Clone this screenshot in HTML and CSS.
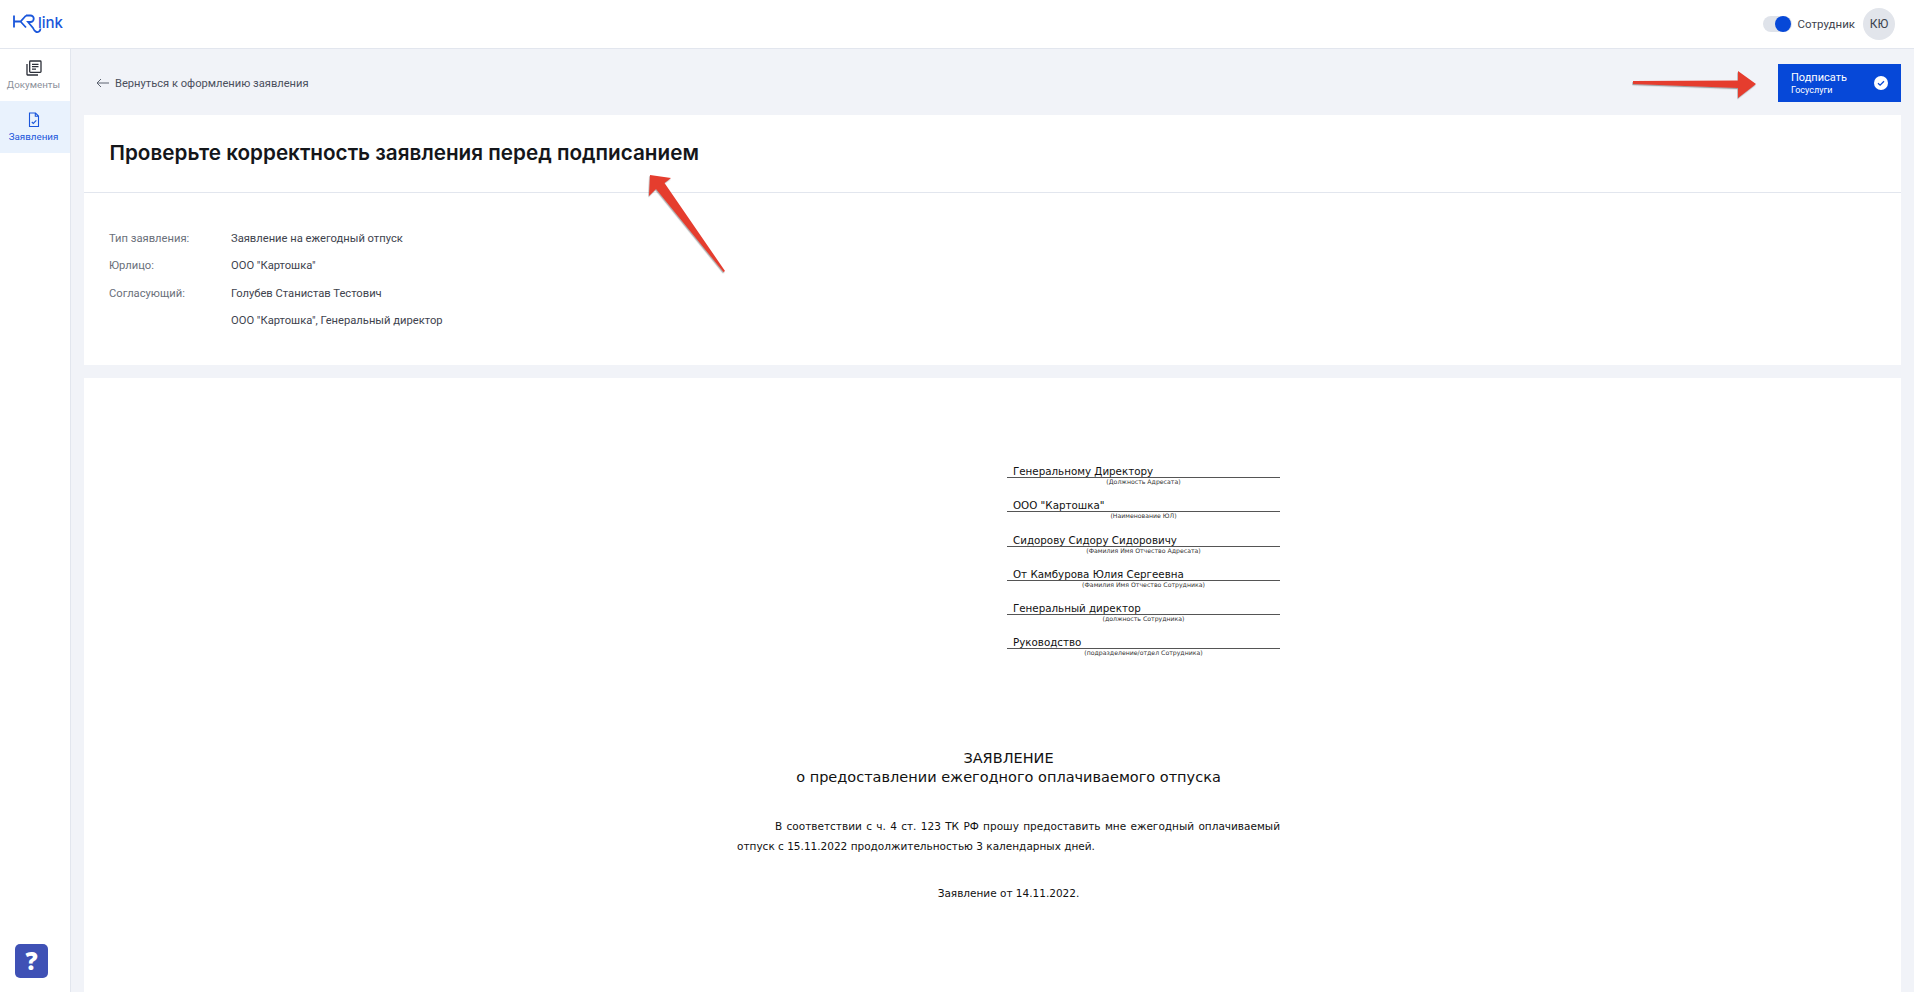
FILE: index.html
```html
<!DOCTYPE html>
<html lang="ru">
<head>
<meta charset="utf-8">
<title>HRlink</title>
<link rel="stylesheet" href="styles.css">
</head>
<body>
<div class="app">
  <header class="topbar">
    <svg class="logo" viewBox="0 0 50 21" width="50" height="21" fill="none" stroke="#1a56db" stroke-width="1.8">
      <path d="M1 2.500v12M1 8.500h6.500L13 2.500M7.500 8.500L13 14.500"/>
      <path d="M13 2.500h4.500a3.200 3.200 0 0 1 0 6.500H15l5 6c1.500 3.500 4 5 6 3.500 1-.8 1.500-2 1.500-3"/>
      <text x="25" y="14.500" class="logo-text" stroke="none" fill="#1a56db">link</text>
    </svg>
    <div class="user">
      <span class="toggle"><span class="knob"></span></span>
      <span class="role">Сотрудник</span>
      <span class="avatar">КЮ</span>
    </div>
  </header>
  <div class="body-row">
    <nav class="sidebar">
      <a class="nav-item">
        <svg width="16" height="16" viewBox="0 0 16 16" fill="none" stroke="#2b2f38" stroke-width="1.300">
          <path d="M1 4v10.500a.5.500 0 0 0 .5.500H12"/>
          <rect x="3.700" y="1" width="11.300" height="11.300" rx=".8"/>
          <path d="M6 4.300h6.500M6 6.700h6.500M6 9.100h4"/>
        </svg>
        <span>Документы</span>
      </a>
      <a class="nav-item active">
        <svg width="16" height="16" viewBox="0 0 16 16" fill="none" stroke="#1a56db" stroke-width="1.100">
          <path d="M3.500 1h6l3 3v10.500h-9zM9.300 1v3.200h3.200"/>
          <path d="M5.800 10l1.500 1.400 3-3"/>
        </svg>
        <span>Заявления</span>
      </a>
      <button class="help">?</button>
    </nav>
    <main class="main">
      <div class="action-bar">
        <a class="back">
          <svg width="13" height="10" viewBox="0 0 13 10" fill="none" stroke="#5c6370" stroke-width="1"><path d="M13 5H1M5 1L1 5l4 4"/></svg>
          <span>Вернуться к оформлению заявления</span>
        </a>
        <button class="sign">
          <span class="sign-text"><span class="sign-title">Подписать</span><span class="sign-sub">Госуслуги</span></span>
          <svg width="14" height="14" viewBox="0 0 14 14"><circle cx="7" cy="7" r="7" fill="#fff"/><path d="M4 7.200l2.100 2 3.900-4" fill="none" stroke="#0648d8" stroke-width="1.300"/></svg>
        </button>
      </div>
      <section class="card summary">
        <h1 class="title">Проверьте корректность заявления перед подписанием</h1>
        <dl class="facts">
          <dt>Тип заявления:</dt><dd>Заявление на ежегодный отпуск</dd>
          <dt>Юрлицо:</dt><dd>ООО "Картошка"</dd>
          <dt>Согласующий:</dt><dd>Голубев Станистав Тестович</dd>
          <dt></dt><dd>ООО "Картошка", Генеральный директор</dd>
        </dl>
      </section>
      <section class="card document">
        <div class="doc">
          <div class="addressee">
            <div class="field"><div class="field-value">Генеральному Директору</div><div class="field-caption">(Должность Адресата)</div></div>
            <div class="field"><div class="field-value">ООО "Картошка"</div><div class="field-caption">(Наименование ЮЛ)</div></div>
            <div class="field"><div class="field-value">Сидорову Сидору Сидоровичу</div><div class="field-caption">(Фамилия Имя Отчество Адресата)</div></div>
            <div class="field"><div class="field-value">От Камбурова Юлия Сергеевна</div><div class="field-caption">(Фамилия Имя Отчество Сотрудника)</div></div>
            <div class="field"><div class="field-value">Генеральный директор</div><div class="field-caption">(должность Сотрудника)</div></div>
            <div class="field"><div class="field-value">Руководство</div><div class="field-caption">(подразделение/отдел Сотрудника)</div></div>
          </div>
          <h2 class="doc-title">ЗАЯВЛЕНИЕ<br>о предоставлении ежегодного оплачиваемого отпуска</h2>
          <p class="doc-text">В соответствии с ч. 4 ст. 123 ТК РФ прошу предоставить мне ежегодный оплачиваемый отпуск с 15.11.2022 продолжительностью 3 календарных дней.</p>
          <p class="doc-date">Заявление от 14.11.2022.</p>
        </div>
      </section>
    </main>
  </div>
  <svg class="annotations" width="1914" height="992" viewBox="0 0 1914 992">
    <defs><filter id="sh" x="-10%" y="-10%" width="120%" height="120%"><feDropShadow dx="-.6" dy="1.200" stdDeviation=".5" flood-color="#555" flood-opacity=".55"/></filter></defs>
    <g fill="#e53c2e" filter="url(#sh)">
      <path d="M1633 81L1738 80.500V71L1756 84L1738 98V88L1633 84Z"/>
      <path d="M650 175L671 178L664.500 183L725 271L723.500 272L656 189L649 196Z"/>
    </g>
  </svg>
</div>
</body>
</html>
```
FILE: styles.css
```css
* { box-sizing: border-box; }
html, body { margin: 0; height: 100%; overflow: hidden; }
body { font-family: "Roboto", "Liberation Sans", sans-serif; color: #2b2f38; background: #fff; }
.app { position: relative; display: flex; flex-direction: column; height: 100vh; }
.topbar { height: 49px; flex: none; display: flex; align-items: center; justify-content: space-between; padding: 0 19px 1px 13px; background: #fff; border-bottom: 1px solid #e2e6ee; }
.logo { display: block; margin-top: -1px; }
.logo-text { font-family: "Inter", sans-serif; font-size: 15px; font-weight: 500; }
.user { display: flex; align-items: center; }
.toggle { position: relative; width: 29px; height: 16px; border-radius: 8px; background: #dfe3ea; }
.knob { position: absolute; right: 1px; top: 0; width: 16px; height: 16px; border-radius: 50%; background: #0648d8; }
.role { margin-left: 6px; font-size: 11.500px; color: #3e434e; }
.avatar { margin-left: 8px; width: 32px; height: 32px; border-radius: 50%; background: #e2e5eb; display: flex; align-items: center; justify-content: center; font-size: 12px; color: #3e434e; }
.body-row { flex: 1; display: flex; min-height: 0; }
.sidebar { width: 71px; flex: none; display: flex; flex-direction: column; background: #fff; border-right: 1px solid #e2e6ee; }
.nav-item { height: 52px; padding-right: 3px; display: flex; flex-direction: column; align-items: center; justify-content: center; gap: 3.500px; font-size: 9.800px; color: #8b909a; }
.nav-item.active { background: #e9f2fd; color: #1a56db; }
.help { margin: auto 0 14px 15px; width: 33px; height: 34px; border: 0; border-radius: 5px; background: #3f51b5; color: #fff; font-family: "Open Sans", sans-serif; font-size: 24px; font-weight: 800; line-height: 34px; padding: 0; }
.main { flex: 1; min-width: 0; padding: 15px 13px 0; background: #f1f3f8; display: flex; flex-direction: column; gap: 13px; }
.action-bar { display: flex; align-items: center; justify-content: space-between; height: 38px; flex: none; }
.back { display: flex; align-items: center; gap: 6px; margin-left: 12px; font-size: 11.150px; color: #4a4f5c; }
.sign { width: 123px; height: 38px; padding: 0 13px; border: 0; background: #0648d8; color: #fff; display: flex; align-items: center; justify-content: space-between; font-family: inherit; }
.sign-text { display: flex; flex-direction: column; align-items: flex-start; }
.sign-title { font-size: 11px; line-height: 15px; }
.sign-sub { font-size: 9px; line-height: 11px; }
.card { background: #fff; flex: none; }
.title { margin: 0; height: 78px; padding: 0 25.500px 3px; display: flex; align-items: center; border-bottom: 1px solid #e2e6ee; font-family: "Inter", sans-serif; font-size: 20.700px; font-weight: 600; color: #14161a; }
.facts { margin: 0; padding: 32px 25px 31px; display: grid; grid-template-columns: 122px 1fr; grid-auto-rows: 27.300px; align-items: center; font-size: 11.200px; }
.facts dt { color: #6a6f7a; }
.facts dd { margin: 0; color: #3e434e; }
.document { flex: 1; min-height: 0; overflow: hidden; }
.doc { width: 543px; margin-left: 653px; padding-top: 85px; font-family: "DejaVu Sans", sans-serif; color: #111; }
.addressee { width: 273px; margin-left: 270px; display: grid; grid-auto-rows: 34.200px; }
.field-value { height: 15px; padding-left: 6px; border-bottom: 1px solid #555; font-size: 10.300px; line-height: 16px; }
.field-caption { text-align: center; font-size: 6.200px; line-height: 8px; color: #333; }
.doc-title { margin: 81px 0 0; text-align: center; font-weight: 400; font-size: 14.500px; line-height: 19px; }
.doc-text { margin: 30px 0 0; text-align: justify; text-indent: 38px; font-size: 10.500px; line-height: 19.500px; }
.doc-date { margin: 28px 0 0; text-align: center; font-size: 10.500px; line-height: 19px; }
.annotations { position: absolute; left: 0; top: 0; pointer-events: none; }
```
